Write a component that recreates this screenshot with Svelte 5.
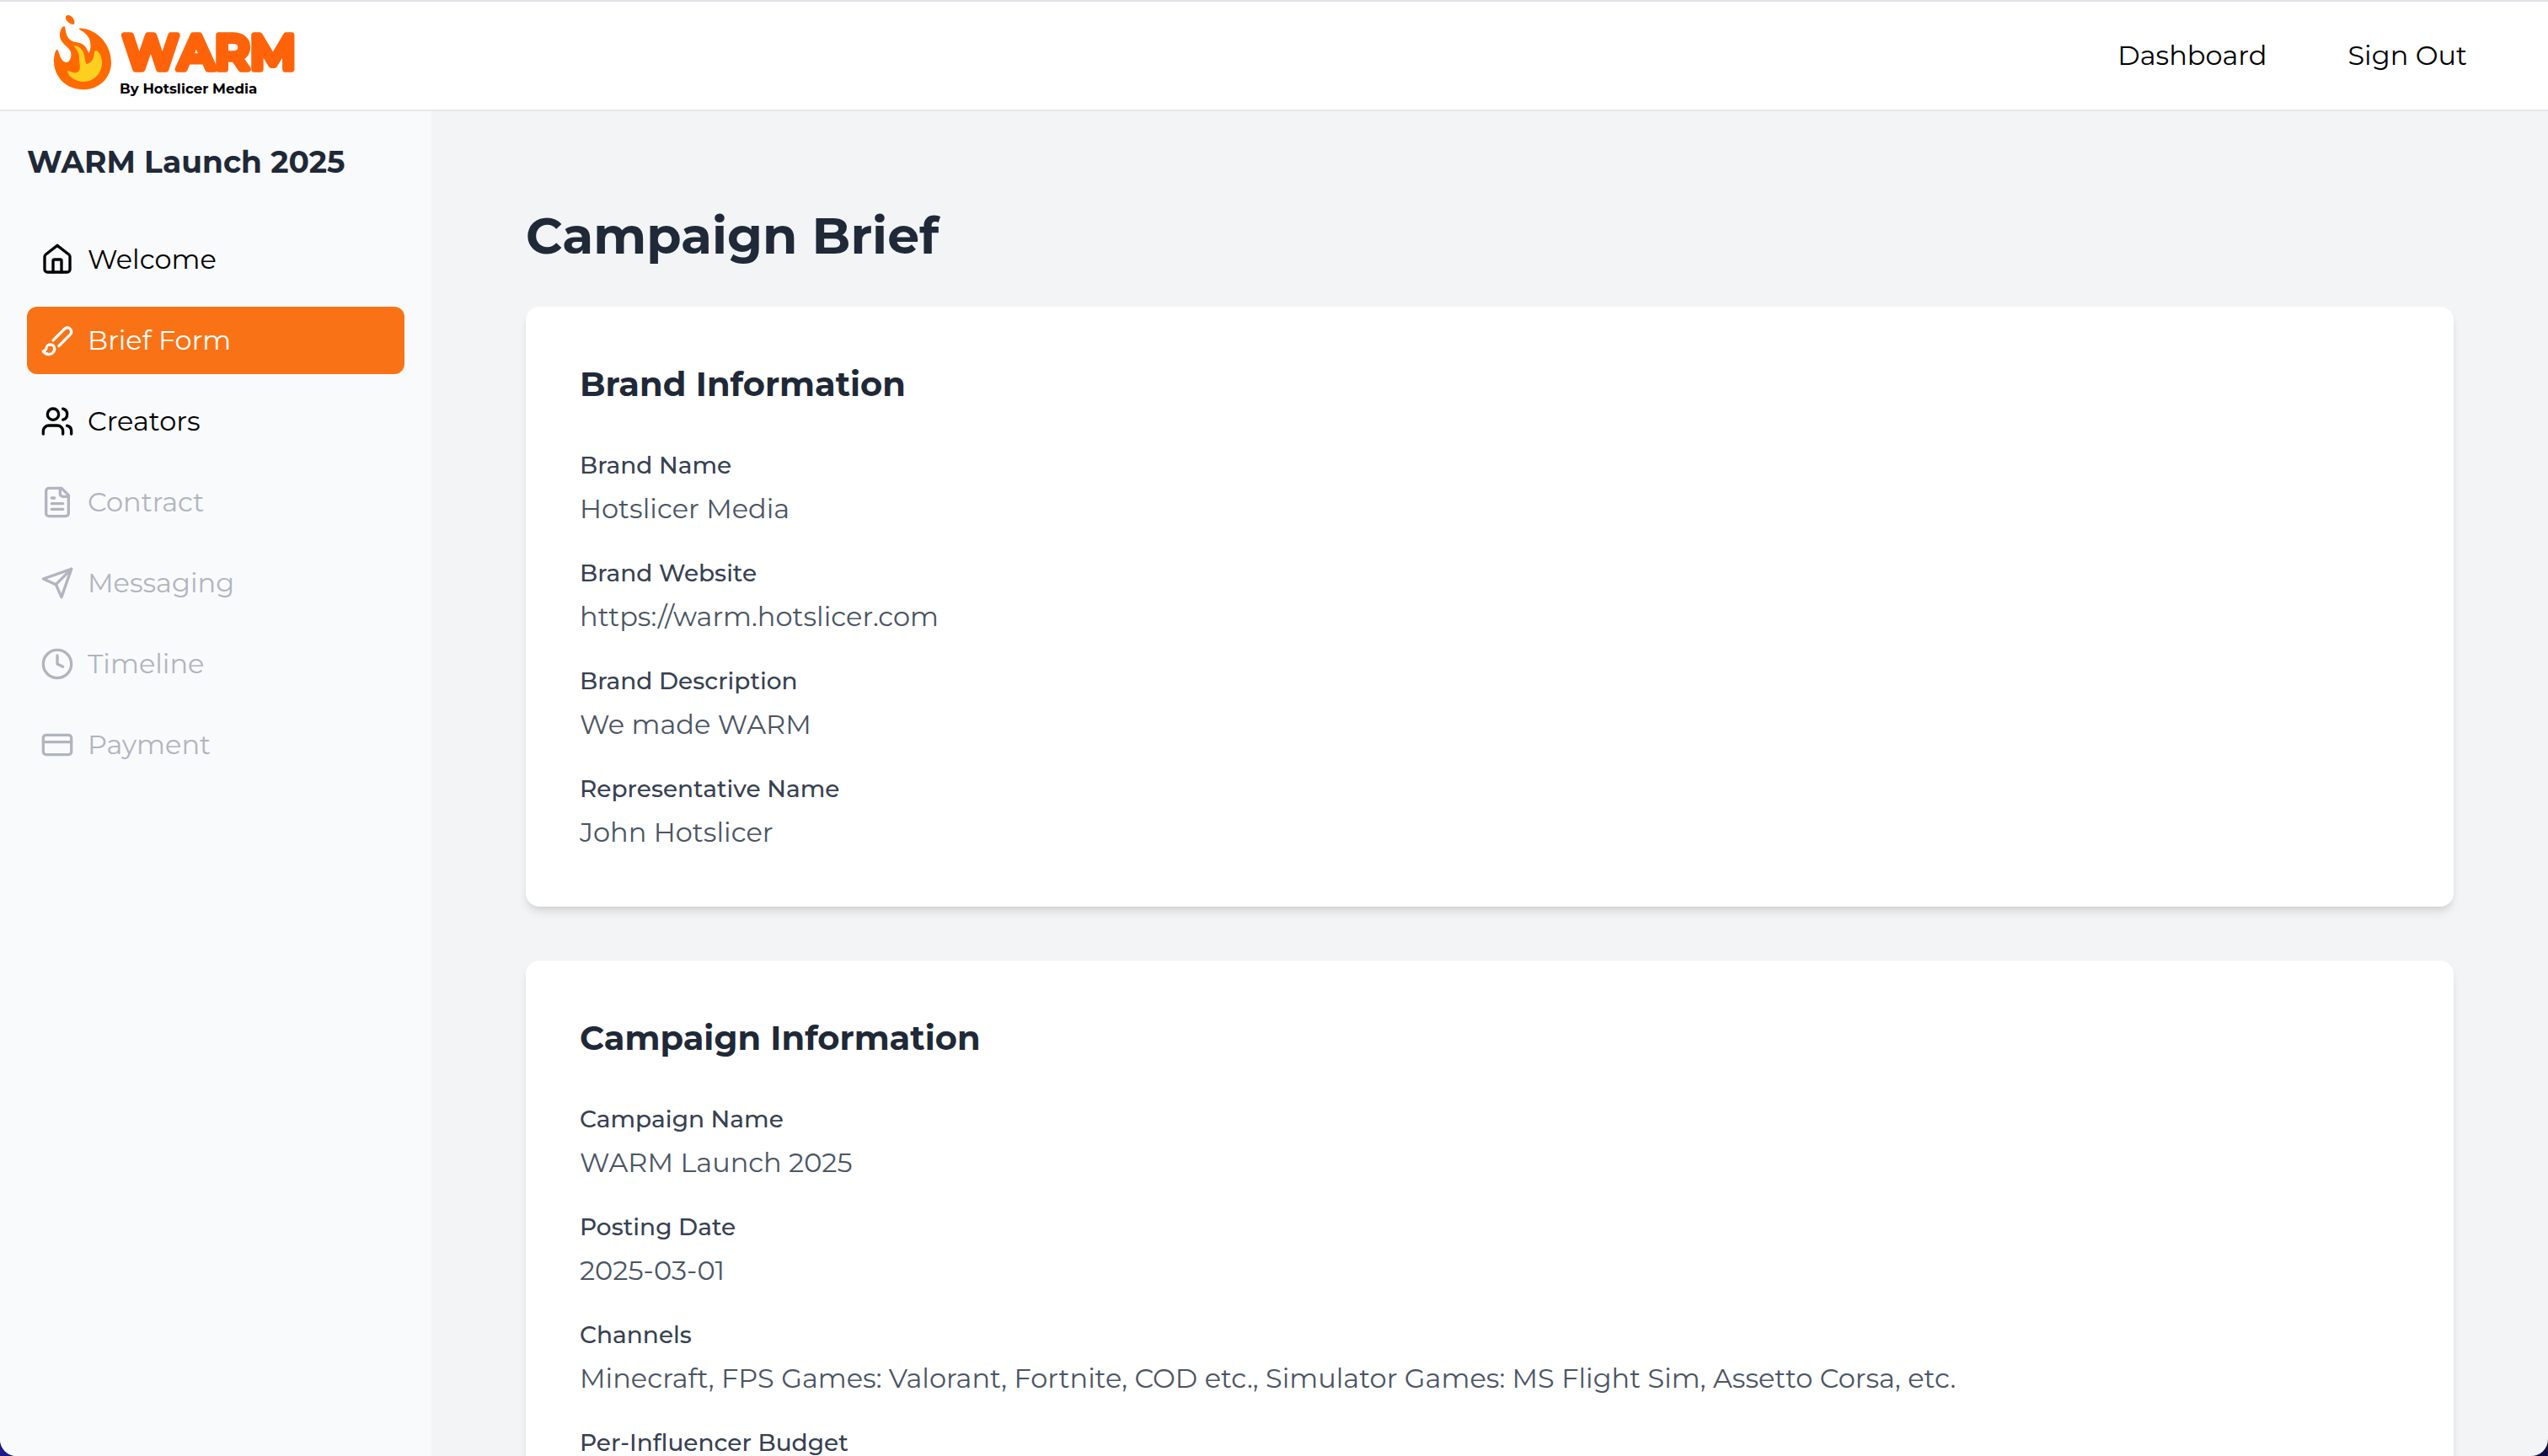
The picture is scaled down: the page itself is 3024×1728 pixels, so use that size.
<script>
  const navItems = [
    { label: 'Welcome', icon: 'home', state: 'normal' },
    { label: 'Brief Form', icon: 'brush', state: 'active' },
    { label: 'Creators', icon: 'users', state: 'normal' },
    { label: 'Contract', icon: 'file', state: 'disabled' },
    { label: 'Messaging', icon: 'send', state: 'disabled' },
    { label: 'Timeline', icon: 'clock', state: 'disabled' },
    { label: 'Payment', icon: 'card', state: 'disabled' }
  ];

  const icons = {
    home: [
      'M15 21v-8a1 1 0 0 0-1-1h-4a1 1 0 0 0-1 1v8',
      'M3 10a2 2 0 0 1 .8-1.6L12 2l8.200 6.400A2 2 0 0 1 21 10v9a2 2 0 0 1-2 2H5a2 2 0 0 1-2-2z'
    ],
    brush: [
      'm9.060 11.900 8.070-8.060a2.850 2.850 0 1 1 4.030 4.030l-8.060 8.080',
      'M7.070 14.940c-1.660 0-3 1.350-3 3.020 0 1.330-2.500 1.520-2 2.020 1.080 1.100 2.490 2.020 4 2.020 2.200 0 4-1.800 4-4.040a3.010 3.010 0 0 0-3-3.020z'
    ],
    users: [
      'M16 21v-2a4 4 0 0 0-4-4H6a4 4 0 0 0-4 4v2',
      'M9 3a4 4 0 1 0 0 8a4 4 0 1 0 0-8',
      'M22 21v-2a4 4 0 0 0-3-3.870',
      'M16 3.130a4 4 0 0 1 0 7.750'
    ],
    file: [
      'M15 2H6a2 2 0 0 0-2 2v16a2 2 0 0 0 2 2h12a2 2 0 0 0 2-2V7z',
      'M14 2v4a2 2 0 0 0 2 2h4',
      'M10 9H8',
      'M16 13H8',
      'M16 17H8'
    ],
    send: ['m22 2-7 20-4-9-9-4z', 'M22 2 11 13'],
    clock: ['M12 2a10 10 0 1 0 0 20a10 10 0 1 0 0-20', 'M12 6v6l4 2'],
    card: [
      'M4 5h16a2 2 0 0 1 2 2v10a2 2 0 0 1-2 2H4a2 2 0 0 1-2-2V7a2 2 0 0 1 2-2z',
      'M2 10h20'
    ]
  };

  const sections = [
    {
      title: 'Brand Information',
      fields: [
        ['Brand Name', 'Hotslicer Media'],
        ['Brand Website', 'https://warm.hotslicer.com'],
        ['Brand Description', 'We made WARM'],
        ['Representative Name', 'John Hotslicer']
      ]
    },
    {
      title: 'Campaign Information',
      fields: [
        ['Campaign Name', 'WARM Launch 2025'],
        ['Posting Date', '2025-03-01'],
        ['Channels', 'Minecraft, FPS Games: Valorant, Fortnite, COD etc., Simulator Games: MS Flight Sim, Assetto Corsa, etc.'],
        ['Per-Influencer Budget', '']
      ]
    }
  ];
</script>

<div class="app">
  <header class="topbar">
    <a class="logo" href="#home" aria-label="WARM by Hotslicer Media">
      <svg viewBox="72 48 870 300" aria-hidden="true">
        <g transform="translate(60 42)">
          <path fill="#ff6a00" d="M54 17C59 8 73 11 81 24C87 34 86 45 81 45C70 45 50 30 54 17Z" />
          <path fill="#ff6a00" d="M50 52C55 62 52 84 68 98C84 112 103 105 119 119C130 128 131 141 137 146C143 136 145 116 138 97C131 77 108 68 101 61C102 57 110 58 120 60C175 71 216 122 216 180C216 236 172 277 116 277C56 277 12 232 12 175C12 154 17 137 23 134C29 138 31 153 37 165C44 179 56 184 65 176C74 166 77 147 67 134C58 122 35 109 33 87C32 69 41 49 50 52Z" />
          <path fill="#fdd01f" d="M85 121C97 118 116 134 120 154C122 167 123 178 128 186C135 185 142 181 147 174C158 160 153 144 160 138C170 136 183 159 183 181C183 219 155 249 117 249C88 249 62 230 60 211C70 210 75 219 90 217C101 215 107 206 104 190C101 174 104 161 99 146C95 135 84 127 85 121Z" />
        </g>
        <text class="wordmark" x="318" y="247">WARM</text>
        <text class="byline" x="306" y="333">By Hotslicer Media</text>
      </svg>
    </a>
    <nav class="links" aria-label="Account">
      <a href="#dashboard">Dashboard</a>
      <a href="#sign-out">Sign Out</a>
    </nav>
  </header>

  <div class="body">
    <aside class="sidebar">
      <h2>WARM Launch 2025</h2>
      <nav aria-label="Campaign">
        {#each navItems as item}
          <button
            type="button"
            class="item {item.state}"
            disabled={item.state === 'disabled'}
            aria-current={item.state === 'active' ? 'page' : undefined}
          >
            <svg viewBox="0 0 24 24" aria-hidden="true">
              {#each icons[item.icon] as d}<path {d} />{/each}
            </svg>
            <span>{item.label}</span>
          </button>
        {/each}
      </nav>
    </aside>

    <main>
      <h1>Campaign Brief</h1>
      {#each sections as section}
        <section class="card">
          <h2>{section.title}</h2>
          <dl>
            {#each section.fields as [label, value]}
              <div class="field">
                <dt>{label}</dt>
                <dd>{value}</dd>
              </div>
            {/each}
          </dl>
        </section>
      {/each}
    </main>
  </div>
</div>

<style>
  :global(body) {
    margin: 0;
    background: linear-gradient(90deg, #1f1a87, #120a45);
  }

  .app {
    display: flex;
    flex-direction: column;
    box-sizing: border-box;
    height: 100vh;
    overflow: hidden;
    border-top: 2px solid #e2e2e8;
    border-radius: 0 0 20px 20px;
    background: #f3f4f6;
    color: #000;
    font-family: Montserrat, Inter, sans-serif;
    font-size: 32px;
    line-height: 48px;
  }

  h1,
  h2,
  dl,
  dd {
    margin: 0;
  }

  .topbar {
    display: flex;
    flex: none;
    align-items: center;
    justify-content: space-between;
    box-sizing: border-box;
    height: 130px;
    padding: 0 96px 0 64px;
    border-bottom: 2px solid #e5e7eb;
    background: #fff;
  }

  .logo {
    display: flex;
  }

  .logo svg {
    width: 290px;
    height: 100px;
  }

  .wordmark {
    font-size: 172px;
    font-weight: 600;
    font-kerning: none;
    fill: #ff6309;
    stroke: #ff6309;
    stroke-width: 22px;
    stroke-linejoin: round;
  }

  .byline {
    font-size: 50px;
    font-weight: 700;
    fill: #000;
  }

  .links {
    display: flex;
    gap: 96px;
  }

  .links a {
    color: inherit;
    text-decoration: none;
  }

  .body {
    display: flex;
    flex: 1;
    min-height: 0;
  }

  .sidebar {
    flex: none;
    box-sizing: border-box;
    width: 512px;
    padding: 32px;
    background: #f9fafb;
  }

  .sidebar h2 {
    margin-bottom: 48px;
    color: #1f2937;
    font-size: 36px;
    font-weight: 700;
    line-height: 56px;
  }

  .sidebar nav {
    display: flex;
    flex-direction: column;
    gap: 16px;
  }

  .item {
    display: flex;
    align-items: center;
    gap: 16px;
    width: 100%;
    padding: 16px;
    border: 0;
    border-radius: 12px;
    background: none;
    color: #000;
    font: inherit;
    text-align: left;
  }

  .item.active {
    background: #f97316;
    color: #fff;
  }

  .item.disabled {
    color: #b0b5bf;
  }

  .item svg {
    flex: none;
    width: 40px;
    height: 40px;
    fill: none;
    stroke: currentColor;
    stroke-width: 2;
    stroke-linecap: round;
    stroke-linejoin: round;
  }

  main {
    flex: 1;
    min-width: 0;
    padding: 112px;
    overflow-y: auto;
    scrollbar-width: none;
  }

  h1 {
    margin-bottom: 48px;
    color: #1f2937;
    font-size: 60px;
    font-weight: 700;
    line-height: 72px;
  }

  .card {
    margin-bottom: 64px;
    padding: 64px;
    border-radius: 16px;
    background: #fff;
    box-shadow:
      0 8px 12px -2px rgb(0 0 0 / 0.1),
      0 4px 8px -4px rgb(0 0 0 / 0.1);
  }

  .card h2 {
    margin-bottom: 48px;
    color: #1f2937;
    font-size: 40px;
    font-weight: 700;
    line-height: 56px;
  }

  dl {
    display: flex;
    flex-direction: column;
    gap: 32px;
  }

  .field {
    display: flex;
    flex-direction: column;
    gap: 8px;
  }

  dt {
    color: #374151;
    font-size: 28px;
    font-weight: 500;
    line-height: 40px;
  }

  dd {
    min-height: 48px;
    color: #4b5563;
  }
</style>
